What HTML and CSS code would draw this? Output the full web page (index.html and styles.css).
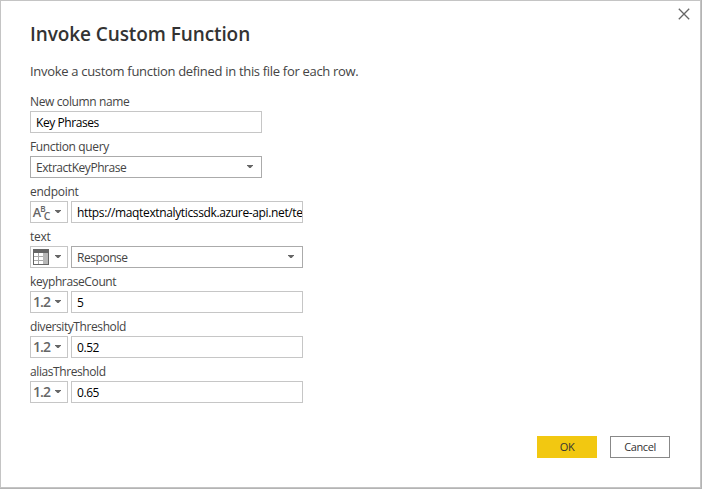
FILE: index.html
```html
<!DOCTYPE html>
<html lang="en">
<head>
<meta charset="utf-8">
<title>Invoke Custom Function</title>
<link rel="stylesheet" href="styles.css">
</head>
<body>
<main class="dialog">
  <button class="close" aria-label="Close"><svg width="12" height="12" viewBox="0 0 12 12"><path d="M.8 .8 11.2 11.2M11.2 .8 .8 11.2"/></svg></button>
  <h1>Invoke Custom Function</h1>
  <p class="intro">Invoke a custom function defined in this file for each row.</p>
  <form class="fields">
    <div class="field">
      <label>New column name</label>
      <div class="row"><div class="box value">Key Phrases</div></div>
    </div>
    <div class="field">
      <label class="query">Function query</label>
      <div class="row"><div class="box value select">ExtractKeyPhrase<i class="arrow"></i></div></div>
    </div>
    <div class="field">
      <label class="endpoint">endpoint</label>
      <div class="row">
        <div class="box type"><svg class="abc" width="18" height="18" viewBox="0 0 18 18"><text x="-.2" y="14" font-size="13" textLength="8.4" lengthAdjust="spacingAndGlyphs">A</text><text x="7.3" y="9" font-size="9.5" textLength="5.4" lengthAdjust="spacingAndGlyphs">B</text><text x="10.8" y="17" font-size="10.5">C</text></svg><i class="arrow"></i></div>
        <div class="box value url">https://maqtextnalyticssdk.azure-api.net/te</div>
      </div>
    </div>
    <div class="field">
      <label class="endpoint">text</label>
      <div class="row">
        <div class="box type"><svg class="grid" width="16" height="16" viewBox="0 0 16 16" shape-rendering="crispEdges"><path fill="#666" d="M0 0h16v16H0z"/><path fill="#fff" d="M1 4h4v3H1zM6 4h4v3H6zM1 8h4v3H1zM6 8h4v3H6zM1 12h4v3H1zM6 12h4v3H6z"/><path fill="#aaa" d="M5 4h1v11H5zM1 7h9v1H1zM1 11h9v1H1z"/><path fill="#b8b8b8" d="M10 4h5v11h-5z"/></svg><i class="arrow"></i></div>
        <div class="box value select">Response<i class="arrow"></i></div>
      </div>
    </div>
    <div class="field">
      <label class="count">keyphraseCount</label>
      <div class="row"><div class="box type"><b>1.2</b><i class="arrow"></i></div><div class="box value">5</div></div>
    </div>
    <div class="field">
      <label class="threshold">diversityThreshold</label>
      <div class="row"><div class="box type"><b>1.2</b><i class="arrow"></i></div><div class="box value">0.52</div></div>
    </div>
    <div class="field">
      <label class="threshold">aliasThreshold</label>
      <div class="row"><div class="box type"><b>1.2</b><i class="arrow"></i></div><div class="box value">0.65</div></div>
    </div>
  </form>
  <footer><button class="ok">OK</button><button class="cancel">Cancel</button></footer>
</main>
</body>
</html>
```
FILE: styles.css
```css
* { box-sizing: border-box; }
body {
  margin: 0;
  width: 702px;
  height: 489px;
  overflow: hidden;
  background: #b4b4b4;
  font-family: "Open Sans", "Noto Sans", sans-serif;
  color: #444;
}
.dialog {
  position: relative;
  width: 701px;
  height: 488px;
  padding: 21px 29px 0;
  background: #fff;
  border: 1px solid #c4c4c4;
}
button { padding: 0; font-family: inherit; }
h1 { margin: 0; height: 24px; font-size: 19px; line-height: 24px; font-weight: 600; letter-spacing: -.09px; color: #333; white-space: nowrap; }
.intro { margin: 15px 0 0; height: 20px; font-size: 13px; line-height: 20px; letter-spacing: -.31px; white-space: nowrap; }
.fields { display: flex; flex-direction: column; margin-top: 7px; }
.field { height: 45px; padding-top: 4px; }
label { display: block; height: 19px; font-size: 12px; line-height: 19px; letter-spacing: -.37px; white-space: nowrap; }
.query { letter-spacing: -.37px; }
.endpoint { letter-spacing: -.27px; }
.count { letter-spacing: -.38px; }
.threshold { letter-spacing: -.41px; }
.row { display: flex; gap: 3px; height: 22px; }
.box { display: flex; align-items: center; height: 22px; border: 1px solid #c6c6c6; }
.value { width: 232px; padding: 2px 0 0 5px; font-size: 12px; line-height: 18px; letter-spacing: -.42px; color: #000; overflow: hidden; white-space: nowrap; }
.url { letter-spacing: -.36px; }
.select { border-color: #ababab; color: #444; justify-content: space-between; padding-right: 8px; letter-spacing: -.45px; }
.arrow { width: 6px; height: 3px; margin-top: -1px; background: #666; clip-path: polygon(0 0, 100% 0, 100% 20%, 60% 100%, 40% 100%, 0 20%); }
.select .arrow { margin-top: -3px; }
.type { width: 38px; padding: 0 6px 0 2px; justify-content: space-between; }
.type b { font-size: 14px; line-height: 20px; font-weight: 600; letter-spacing: -.9px; color: #666; }
.abc { overflow: visible; }
.abc text { fill: #666; font-weight: 600; }
.close { position: absolute; left: 677px; top: 7px; width: 12px; height: 12px; border: 0; background: none; }
.close svg { display: block; stroke: #666; stroke-width: 1.3; fill: none; }
footer { display: flex; gap: 13px; margin: 33px 0 0 507px; }
footer button { width: 60px; height: 22px; border: 0; font-size: 11px; line-height: 20px; letter-spacing: -.4px; color: #333; background: #f2c811; }
footer .cancel { border: 1px solid #888; background: #fff; }
```
